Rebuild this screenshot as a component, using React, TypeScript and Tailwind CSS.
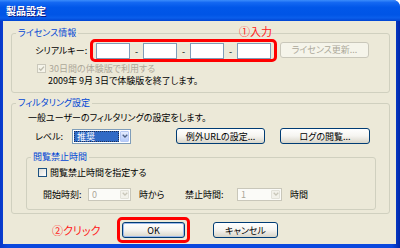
import React from "react";

const Btn = ({ w, children, disabled, focus }: { w: string; children: React.ReactNode; disabled?: boolean; focus?: boolean }) => (
  <div
    className={`${w} h-[16px] rounded-[3px] border flex items-center justify-center leading-none ${
      disabled
        ? "border-[#C9C7BA] bg-[#F5F4EA] text-[#ACA899]"
        : focus
        ? "border-[#003C74] bg-gradient-to-b from-white via-[#F5F4F0] to-[#D8D5C9] text-black shadow-[inset_0_0_0_1px_#9DB9EB]"
        : "border-[#003C74] bg-gradient-to-b from-white via-[#F5F4F0] to-[#D8D5C9] text-black"
    }`}
  >
    {children}
  </div>
);

const Check = ({ checked, disabled }: { checked?: boolean; disabled?: boolean }) => (
  <div
    className={`w-[9px] h-[9px] border flex items-center justify-center shrink-0 ${
      disabled ? "border-[#CAC8BB] bg-[#F5F4EA]" : "border-[#1C5180] bg-gradient-to-br from-[#DCDCD7] to-white"
    }`}
  >
    {checked && (
      <svg width="7" height="7" viewBox="0 0 7 7">
        <path d="M1 3.4 L2.8 5.2 L6 1.6" stroke={disabled ? "#BEBCAE" : "#21A121"} strokeWidth="1.4" fill="none" />
      </svg>
    )}
  </div>
);

const Arrow = ({ disabled }: { disabled?: boolean }) => (
  <div
    className={`w-[9px] h-full rounded-[1px] border flex items-center justify-center ${
      disabled ? "border-[#E2E1D9] bg-[#F2F1EA]" : "border-[#B5C8F4] bg-gradient-to-b from-[#E3EBFD] to-[#B7CCF9]"
    }`}
  >
    <svg width="6" height="4" viewBox="0 0 6 4">
      <path d="M0.7 0.8 L3 3 L5.3 0.8" stroke={disabled ? "#C9C7BA" : "#4D6185"} strokeWidth="1.3" fill="none" />
    </svg>
  </div>
);

const Group = ({ label, cls, children }: { label: string; cls: string; children: React.ReactNode }) => (
  <div className={`relative border border-[#D0D0BF] rounded-[3px] ${cls}`}>
    <div className="absolute left-[4px] top-[-7px] px-[2px] bg-[#ECE9D8] text-[#0046D5] leading-[12px]">{label}</div>
    {children}
  </div>
);

const Input = () => <div className="w-[34px] h-[16px] border border-[#7F9DB9] bg-white" />;
const Dash = () => <div className="w-[13px] flex justify-center leading-none">-</div>;

export default function App() {
  return (
    <div className="w-[400px] h-[248px] bg-white text-[9px] text-black [font-family:'Noto_Sans_CJK_JP','Noto_Sans_CJK_SC',sans-serif] [font-feature-settings:'palt']">
      <div className="w-[400px] h-[248px] flex flex-col rounded-tr-[7px] overflow-hidden bg-[#0A3FD5]">
        <div className="h-[21px] shrink-0 flex items-center pl-[6px] bg-[linear-gradient(to_bottom,#3B8DFB_0%,#1468F2_12%,#0157E9_35%,#0055E6_70%,#0A5EEB_85%,#0044D2_100%)]">
          <span className="text-white font-bold text-[10px] leading-none [text-shadow:1px_1px_0_#0A1883]">製品設定</span>
        </div>
        <div className="flex-1 flex pl-[3px] pr-[4px] pb-[4px] bg-[linear-gradient(to_right,#0838C8,#0A48DE_2%,#0A48DE_98%,#0027A8)]">
          <div className="flex-1 bg-[#ECE9D8] flex flex-col">
            {/* License group */}
            <Group label="ライセンス情報" cls="mt-[12px] ml-[8px] mr-[6px] h-[60px]">
              <div className="flex items-center pl-[23px] pt-[5px] h-[28px]">
                <div className="w-[55px] leading-none">シリアルキー:</div>
                <div className="relative flex items-center border-[3px] border-[#FF0000] rounded-[5px] pl-[3px] pr-[3px] pt-[1px] h-[23px]">
                  <div className="absolute right-[2px] top-[-16px] text-[#FF2020] text-[11px] leading-none whitespace-nowrap">①入力</div>
                  <Input />
                  <Dash />
                  <Input />
                  <Dash />
                  <Input />
                  <Dash />
                  <Input />
                </div>
                <div className="ml-[3px] -mt-[2px]">
                  <Btn w="w-[89px]" disabled>
                    ライセンス更新...
                  </Btn>
                </div>
              </div>
              <div className="flex items-center pl-[25px] h-[12px]">
                <Check checked disabled />
                <span className="ml-[3px] text-[#ACA899] leading-none">30日間の体験版で利用する</span>
              </div>
              <div className="flex items-center pl-[36px] h-[12px] leading-none">2009年 9月 3日で体験版を終了します。</div>
            </Group>

            {/* Filtering group */}
            <Group label="フィルタリング設定" cls="mt-[10px] ml-[8px] mr-[6px] h-[111px]">
              <div className="mt-[7px] pl-[16px] h-[12px] flex items-center leading-none">一般ユーザーのフィルタリングの設定をします。</div>
              <div className="mt-[5px] pl-[23px] h-[16px] flex items-center">
                <div className="w-[37px] leading-none">レベル:</div>
                <div className="w-[59px] h-[15px] border border-[#7F9DB9] bg-white flex p-[1px] gap-[1px]">
                  <div className="flex-1 bg-[#316AC5] text-white flex items-center pl-[2px] leading-none border border-dotted border-[#1C2F55]">推奨</div>
                  <Arrow />
                </div>
                <div className="ml-[45px]">
                  <Btn w="w-[89px]">例外URLの設定...</Btn>
                </div>
                <div className="ml-[15px]">
                  <Btn w="w-[90px]">ログの閲覧...</Btn>
                </div>
              </div>
              <Group label="閲覧禁止時間" cls="mt-[13px] ml-[14px] w-[350px] h-[53px]">
                <div className="mt-[8px] pl-[11px] h-[12px] flex items-center">
                  <Check />
                  <span className="ml-[3px] leading-none">閲覧禁止時間を指定する</span>
                </div>
                <div className="mt-[9px] pl-[16px] h-[14px] flex items-center">
                  <div className="w-[45px] leading-none">開始時刻:</div>
                  <div className="w-[43px] h-[13px] border border-[#C9C7BA] bg-[#FBFBF8] flex p-[1px]">
                    <div className="flex-1 text-[#ACA899] leading-none flex items-center pl-[2px]">0</div>
                    <Arrow disabled />
                  </div>
                  <div className="ml-[8px] w-[46px] leading-none">時から</div>
                  <div className="w-[52px] leading-none">禁止時間:</div>
                  <div className="w-[45px] h-[13px] border border-[#C9C7BA] bg-[#FBFBF8] flex p-[1px]">
                    <div className="flex-1 text-[#ACA899] leading-none flex items-center pl-[2px]">1</div>
                    <Arrow disabled />
                  </div>
                  <div className="ml-[8px] leading-none">時間</div>
                </div>
              </Group>
            </Group>

            {/* Bottom buttons */}
            <div className="mt-[3px] pl-[49px] flex items-center">
              <div className="w-[65px] text-[#FF2020] text-[11px] leading-none">②クリック</div>
              <div className="border-[3px] border-[#FF0000] rounded-[5px] px-[2px] py-[2px]">
                <Btn w="w-[63px]" focus>
                  OK
                </Btn>
              </div>
              <div className="ml-[23px]">
                <Btn w="w-[65px]">キャンセル</Btn>
              </div>
            </div>
          </div>
        </div>
      </div>
    </div>
  );
}
